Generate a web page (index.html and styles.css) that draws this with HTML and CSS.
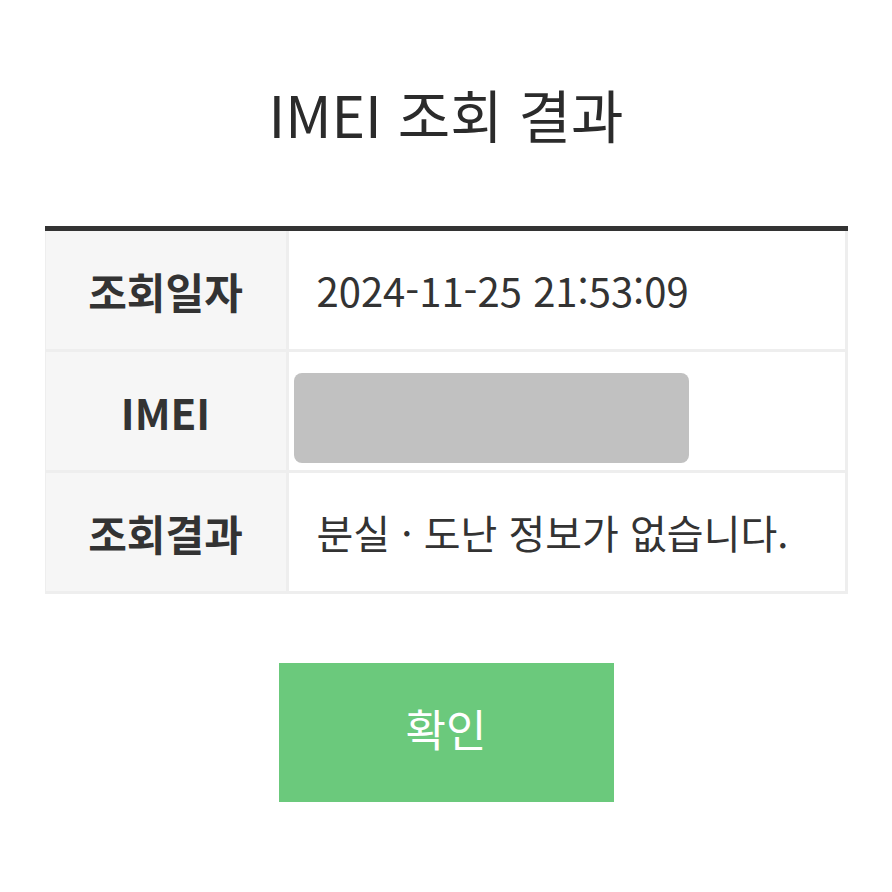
FILE: index.html
```html
<!DOCTYPE html>
<html lang="ko">
<head>
<meta charset="utf-8">
<link rel="stylesheet" href="styles.css">
</head>
<body>
<main class="page">
  <h1 class="title">IMEI 조회 결과</h1>
  <div class="result">
    <div class="row">
      <div class="label">조회일자</div>
      <div class="value">2024-11-25 21:53:09</div>
    </div>
    <div class="row">
      <div class="label">IMEI</div>
      <div class="value"><span class="mask"></span></div>
    </div>
    <div class="row">
      <div class="label">조회결과</div>
      <div class="value">분실 · 도난 정보가 없습니다.</div>
    </div>
  </div>
  <button class="confirm">확인</button>
</main>
</body>
</html>
```
FILE: styles.css
```css
html, body { margin: 0; padding: 0; background: #fff; }
body {
  font-family: "Noto Sans CJK KR", "Noto Sans", sans-serif;
  color: #333;
}
.page {
  width: 803px;
  margin: 0 auto;
  display: flex;
  flex-direction: column;
  align-items: center;
  padding-top: 72px;
}
.title {
  margin: 0;
  font-size: 57px;
  font-weight: 400;
  line-height: 82px;
  color: #2b2b2b;
}
.result {
  width: 100%;
  box-sizing: border-box;
  margin-top: 72px;
  border-top: 5px solid #333;
  background: #eeeeee;
  display: flex;
  flex-direction: column;
  gap: 3px;
  padding: 0 3px 3px 1px;
}
.row {
  display: grid;
  grid-template-columns: 240px 1fr;
  column-gap: 3px;
  height: 118px;
}
.label {
  background: #f6f6f6;
  display: flex;
  align-items: center;
  justify-content: center;
  font-size: 42px;
  font-weight: 700;
  color: #333;
}
.value {
  background: #fff;
  display: flex;
  align-items: center;
  padding-left: 28px;
  font-size: 40px;
  color: #333;
}
.row:nth-child(2) .value { padding-left: 5px; }
.mask {
  width: 395px;
  height: 90px;
  margin-top: 14px;
  border-radius: 8px;
  background: #c1c1c1;
}
.confirm {
  margin-top: 69px;
  width: 335px;
  height: 139px;
  border: none;
  background: #6bc97c;
  color: #fff;
  font-family: inherit;
  font-size: 44px;
  padding: 0 0 10px 0;
}
```
